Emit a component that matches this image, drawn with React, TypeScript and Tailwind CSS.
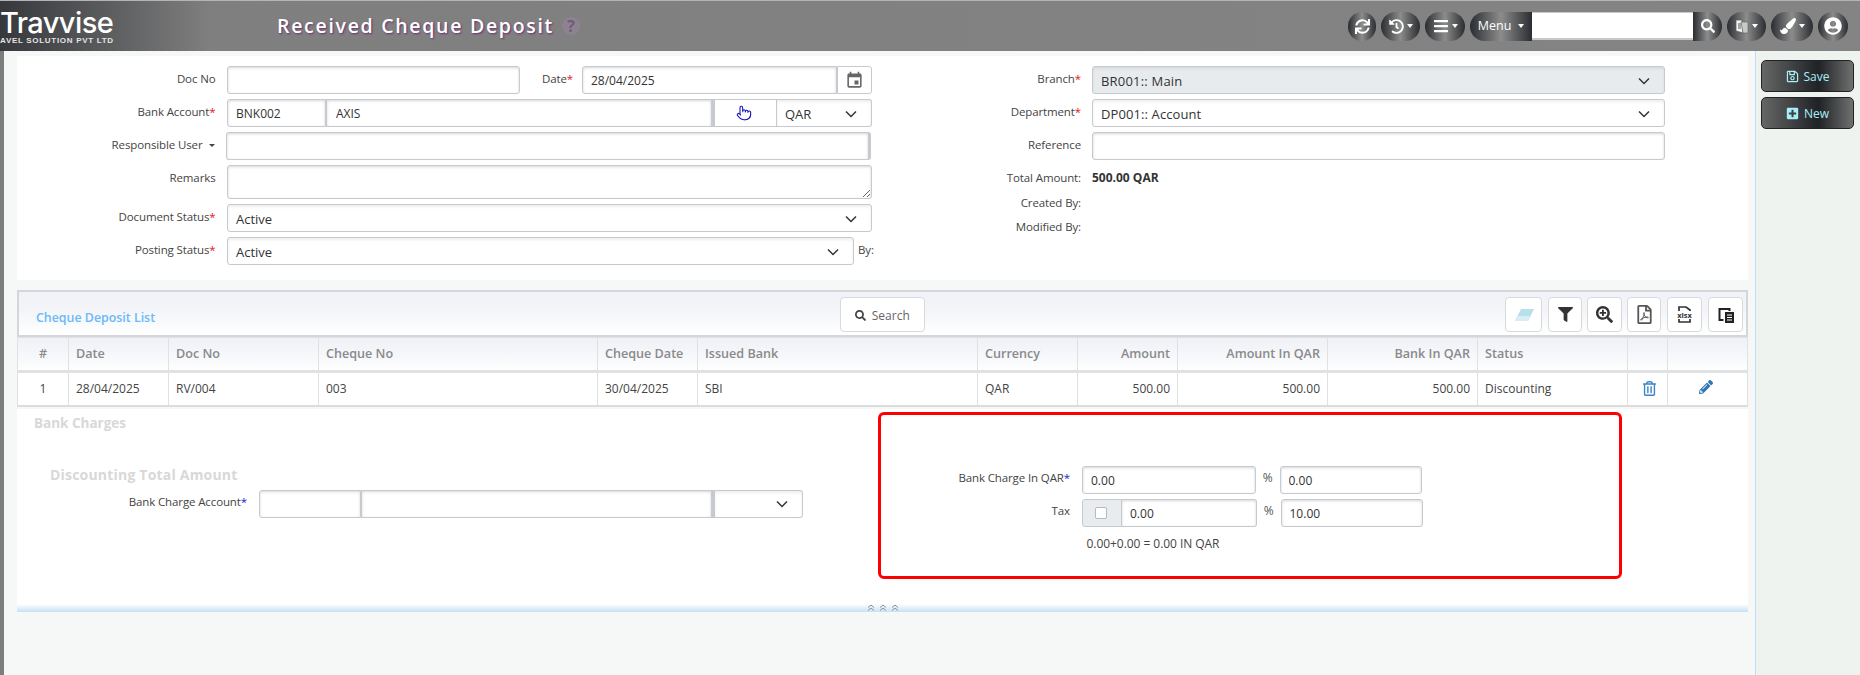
import type { ReactNode } from 'react';
import {
  FaBars,
  FaFilter,
  FaHistory,
  FaPaintBrush,
  FaPencilAlt,
  FaPlusSquare,
  FaRegFilePdf,
  FaRegSave,
  FaRegTrashAlt,
  FaSearch,
  FaSearchPlus,
  FaSync,
  FaUserCircle,
} from 'react-icons/fa';
import { MdEvent } from 'react-icons/md';
import { Pointer } from 'lucide-react';

const INPUT =
  'shrink-0 h-7 border border-[#c6cacf] rounded-[3px] bg-white px-[8px] pt-[1px] text-[12px] text-[#333] shadow-[inset_0_1px_3px_rgba(0,0,0,0.16)] outline-none';

const PILL =
  'h-[29px] flex items-center justify-center gap-[3px] text-white bg-[linear-gradient(90deg,#2a2d31_0%,#8c8c8c_50%,#2a2d31_100%)]';

const Caret = () => (
  <span className="inline-block w-0 h-0 border-x-[3px] border-t-[4px] border-x-transparent border-t-white" />
);

const Chevron = () => (
  <svg width="14" height="14" viewBox="0 0 14 14" fill="none" stroke="#333" strokeWidth="1.5" className="-mt-[3px]">
    <path d="M2 4.5 7 9.5 12 4.5" />
  </svg>
);

const Label = ({
  children,
  star,
  className,
}: {
  children: ReactNode;
  star?: 'red' | 'blue';
  className: string;
}) => (
  <div className={`shrink-0 text-right text-[11.5px] tracking-[-0.12px] text-[#444] ${className}`}>
    {children}
    {star === 'red' && <span className="text-[#e02020]">*</span>}
    {star === 'blue' && <span className="text-[#1a1ae0]">*</span>}
  </div>
);

const Select = ({
  value,
  className,
  disabled,
}: {
  value?: string;
  className: string;
  disabled?: boolean;
}) => (
  <div
    className={`shrink-0 h-7 flex items-center justify-between border border-[#c6cacf] rounded-[3px] pl-[8px] pr-[13px] pt-[4px] text-[13px] text-[#333] shadow-[inset_0_2px_3px_rgba(0,0,0,0.07)] ${
      disabled ? 'bg-[#e8ebee]' : 'bg-white'
    } ${className}`}
  >
    <span>{value}</span>
    <Chevron />
  </div>
);

const ToolButton = ({ children, className }: { children: ReactNode; className: string }) => (
  <button
    className={`h-[35px] flex items-center justify-center bg-white border border-[#d9d9d9] rounded-[4px] text-[#333] ${className}`}
  >
    {children}
  </button>
);

const Header = () => (
  <header className="h-[51px] shrink-0 flex items-center border-t border-[#b4b4b4] bg-[linear-gradient(90deg,#36383c_0px,#7f7f7f_210px,#848484_100%)]">
    <div className="w-[277px] h-full shrink-0 pt-[10px] text-white overflow-hidden">
      <div className="text-[29px] leading-[24px] font-medium font-['Inter',sans-serif] tracking-[-0.55px]">
        Travvise
      </div>
      <div className="mt-[1px] text-[8px] leading-[10px] font-bold tracking-[0.7px] font-['Liberation_Sans',sans-serif] text-[#e4e4e4]">
        AVEL SOLUTION PVT LTD
      </div>
    </div>
    <div className="text-[19.5px] font-semibold tracking-[1.7px] text-white [text-shadow:1px_1px_2px_#6b2f70]">
      Received Cheque Deposit
    </div>
    <div className="ml-[8px] w-[18px] h-[18px] rounded-full bg-[#8d8390] text-[#735a77] text-[16px] font-bold flex items-center justify-center">
      ?
    </div>
    <div className="ml-auto flex items-center gap-[5px] pr-[12px]">
      <div className={`${PILL} w-[28px] rounded-full`}>
        <FaSync size={15} />
      </div>
      <div className={`${PILL} w-[39px] rounded-full`}>
        <FaHistory size={15} />
        <Caret />
      </div>
      <div className={`${PILL} w-[40px] rounded-full`}>
        <FaBars size={16} />
        <Caret />
      </div>
      <div className="flex items-center">
        <div className={`${PILL} w-[62px] rounded-l-full text-[12.5px] gap-[7px]`}>
          Menu
          <Caret />
        </div>
        <input
          readOnly
          className="w-[161px] h-[28px] bg-white border-t border-b-2 border-[#c9c9c9] outline-none"
        />
        <div className={`${PILL} w-[29px] rounded-r-full`}>
          <FaSearch size={14} />
        </div>
      </div>
      <div className={`${PILL} w-[39px] rounded-full`}>
        <svg width="14" height="17" viewBox="0 0 14 17">
          <path d="M1 2h6l1 13-7-2z" fill="#f2f2f2" stroke="#555" strokeWidth="0.7" />
          <path d="M6 4h7v11H8z" fill="#c9c9c9" stroke="#666" strokeWidth="0.7" />
          <path d="M3 6h3M3 8h3M3 10h3" stroke="#444" strokeWidth="0.9" />
        </svg>
        <Caret />
      </div>
      <div className={`${PILL} w-[42px] rounded-full`}>
        <FaPaintBrush size={16} />
        <Caret />
      </div>
      <div className={`${PILL} w-[30px] rounded-full`}>
        <FaUserCircle size={18} />
      </div>
    </div>
  </header>
);

const TopForm = () => (
  <section className="h-[224px] flex bg-white pt-[10px]">
    <div className="w-[855px] shrink-0 flex flex-col gap-[5px]">
      <div className="flex h-7">
        <Label className="w-[198.5px] leading-[26px]">Doc No</Label>
        <input readOnly className={`${INPUT} ml-[11.5px] w-[293px]`} />
        <Label star="red" className="w-[53px] leading-[26px]">
          Date
        </Label>
        <input readOnly defaultValue="28/04/2025" className={`${INPUT} ml-[9px] w-[255px] rounded-r-none`} />
        <div className="w-[36px] h-7 flex items-center justify-center border border-[#c6cacf] rounded-r-[3px] text-[#666]">
          <MdEvent size={19} />
        </div>
      </div>
      <div className="flex h-7">
        <Label star="red" className="w-[198.5px] leading-[26px]">
          Bank Account
        </Label>
        <input readOnly defaultValue="BNK002" className={`${INPUT} ml-[11.5px] w-[99px] rounded-r-none`} />
        <input readOnly defaultValue="AXIS" className={`${INPUT} w-[386px] rounded-none pl-[9px]`} />
        <div className="w-[65px] pr-[4px] h-7 flex items-center justify-center border border-l-[3px] border-[#c6cacf] text-[#1414b4]">
          <Pointer size={16} strokeWidth={1.6} fill="#ffffff" />
        </div>
        <Select value="QAR" className="w-[95px] rounded-l-none border-l-0" />
      </div>
      <div className="flex h-7">
        <Label className="w-[198.5px] pr-[1px] leading-[26px]">
          Responsible User
          <span className="inline-block align-middle ml-[6px] w-0 h-0 border-x-[3px] border-t-[3px] border-x-transparent border-t-[#444]" />
        </Label>
        <input readOnly className={`${INPUT} ml-[10.5px] w-[645px] border-r-[3px]`} />
      </div>
      <div className="flex h-[34px]">
        <Label className="w-[198.5px] leading-[26px]">Remarks</Label>
        <textarea readOnly className={`${INPUT} ml-[11.5px] w-[645px] h-[34px]`} />
      </div>
      <div className="flex h-7">
        <Label star="red" className="w-[198.5px] leading-[26px]">
          Document Status
        </Label>
        <Select value="Active" className="ml-[11.5px] w-[645px]" />
      </div>
      <div className="flex h-7">
        <Label star="red" className="w-[198.5px] leading-[26px]">
          Posting Status
        </Label>
        <Select value="Active" className="ml-[11.5px] w-[627px]" />
        <Label className="ml-[4px] leading-[26px]">By:</Label>
      </div>
    </div>
    <div className="flex flex-col gap-[5px]">
      <div className="flex h-7">
        <Label star="red" className="w-[209px] leading-[26px]">
          Branch
        </Label>
        <Select value="BR001:: Main" disabled className="ml-[11px] w-[573px] tracking-[0.2px]" />
      </div>
      <div className="flex h-7">
        <Label star="red" className="w-[209px] leading-[26px]">
          Department
        </Label>
        <Select value="DP001:: Account" className="ml-[11px] w-[573px] tracking-[0.1px]" />
      </div>
      <div className="flex h-7">
        <Label className="w-[209px] leading-[26px]">Reference</Label>
        <input readOnly className={`${INPUT} ml-[11px] w-[573px]`} />
      </div>
      <div className="flex h-[22px] mt-[2px]">
        <Label className="w-[209px] leading-[22px]">Total Amount:</Label>
        <div className="ml-[11px] text-[12px] leading-[22px] font-bold text-[#333]">500.00 QAR</div>
      </div>
      <Label className="w-[209px] leading-[22px] mt-[-2px]">Created By:</Label>
      <Label className="w-[209px] leading-[22px] mt-[-3px]">Modified By:</Label>
    </div>
  </section>
);

const COLUMNS = [
  { name: '#', col: 'w-[51px]', cell: 'text-center' },
  { name: 'Date', col: 'w-[100px]', cell: 'text-left' },
  { name: 'Doc No', col: 'w-[150px]', cell: 'text-left' },
  { name: 'Cheque No', col: 'w-[279px]', cell: 'text-left' },
  { name: 'Cheque Date', col: 'w-[100px]', cell: 'text-left' },
  { name: 'Issued Bank', col: 'w-[280px]', cell: 'text-left' },
  { name: 'Currency', col: 'w-[100px]', cell: 'text-left' },
  { name: 'Amount', col: 'w-[100px]', cell: 'text-right' },
  { name: 'Amount In QAR', col: 'w-[150px]', cell: 'text-right' },
  { name: 'Bank In QAR', col: 'w-[150px]', cell: 'text-right' },
  { name: 'Status', col: 'w-[150px]', cell: 'text-left' },
  { name: '', col: 'w-[40px]', cell: 'text-left' },
  { name: '', col: 'w-[80px]', cell: 'text-left' },
];

const ROW = ['1', '28/04/2025', 'RV/004', '003', '30/04/2025', 'SBI', 'QAR', '500.00', '500.00', '500.00', 'Discounting'];

const DepositList = () => (
  <section className="mt-[10px]">
    <div className="h-[47px] flex items-center border-2 border-[#d5d6d9] bg-[linear-gradient(180deg,#f0f2f7_0%,#f2f4f8_40%,#ffffff_100%)]">
      <div className="w-[821px] shrink-0 pl-[17px] pt-[10px] text-[12.4px] font-semibold text-[#6cb8f8]">
        Cheque Deposit List
      </div>
      <button className="mt-[2px] pt-[2px] h-[35px] w-[84.5px] flex items-center justify-center gap-[6px] bg-white border border-[#d9d9d9] rounded-[4px] text-[12px] text-[#666]">
        <FaSearch size={11} className="text-[#444]" />
        Search
      </button>
      <div className="ml-auto flex items-center pr-[3px] pt-[2px]">
        <ToolButton className="w-[37px]">
          <svg width="20" height="12" viewBox="0 0 20 12">
            <path d="M7 0h13l-6 12H1z" fill="#b5e0ec" />
            <path d="M3.5 7h13L14 12H1z" fill="#d8eef4" />
          </svg>
        </ToolButton>
        <ToolButton className="w-[34px] ml-[6px]">
          <FaFilter size={15} />
        </ToolButton>
        <ToolButton className="w-[35px] ml-[5px]">
          <FaSearchPlus size={17} />
        </ToolButton>
        <ToolButton className="w-[34px] ml-[5px] text-[#555]">
          <FaRegFilePdf size={19} />
        </ToolButton>
        <ToolButton className="w-[35px] ml-[6px]">
          <span className="flex flex-col items-center">
            <svg width="13" height="5" viewBox="0 0 13 5" fill="none" stroke="#333" strokeWidth="1.7">
              <path d="M1 5V1h7l4 3v1" />
            </svg>
            <span className="text-[7.5px] font-bold leading-[8px] text-[#333]">xlsx</span>
            <svg width="13" height="4" viewBox="0 0 13 4" fill="none" stroke="#333" strokeWidth="1.7">
              <path d="M1 0v3h11V0" />
            </svg>
          </span>
        </ToolButton>
        <ToolButton className="w-[35px] ml-[6px]">
          <svg width="18" height="18" viewBox="0 0 18 18">
            <path d="M1.5 2h12v3h-2v-1H3.5v9h3v2h-5z" fill="#222" />
            <rect x="8" y="6" width="9" height="11" fill="#222" />
            <path d="M10 9h5M10 11.5h5M10 14h5" stroke="#fff" strokeWidth="1" />
          </svg>
        </ToolButton>
      </div>
    </div>
    <table className="table-fixed w-[1730px] border-collapse border-b-2 border-[#dcdcdc]">
      <colgroup>
        {COLUMNS.map((c, i) => (
          <col key={i} className={c.col} />
        ))}
      </colgroup>
      <thead>
        <tr className="h-[34px] bg-[linear-gradient(180deg,#eff1f6_0%,#f3f5f9_35%,#ffffff_100%)]">
          {COLUMNS.map((c, i) => (
            <th
              key={i}
              className={`border border-b-[3px] border-[#e0e1e3] px-[7px] text-[12.6px] font-semibold text-[#8a8a8a] ${c.cell}`}
            >
              {c.name}
            </th>
          ))}
        </tr>
      </thead>
      <tbody>
        <tr className="h-[34px] bg-white">
          {ROW.map((v, i) => (
            <td key={i} className={`border border-[#e0e1e3] px-[7px] text-[12px] text-[#444] ${COLUMNS[i].cell}`}>
              {v}
            </td>
          ))}
          <td className="border border-[#e0e1e3] pl-[14px] text-[#3a86c8]">
            <FaRegTrashAlt size={15} className="block" />
          </td>
          <td className="border border-[#e0e1e3] pl-[31px] text-[#2f75b5]">
            <FaPencilAlt size={14} className="block -mt-[3px]" />
          </td>
        </tr>
      </tbody>
    </table>
  </section>
);

const BankCharges = () => (
  <section className="mt-[2px] h-[195px] flex bg-white">
    <div className="w-[861px] shrink-0">
      <div className="ml-[17px] mt-[4px] text-[13.5px] leading-[20px] font-bold text-[#d8d8d8]">Bank Charges</div>
      <div className="ml-[33px] mt-[32px] text-[14px] leading-[20px] tracking-[0.2px] font-bold text-[#d8d8d8]">
        Discounting Total Amount
      </div>
      <div className="flex mt-[5px]">
        <Label star="blue" className="w-[230px] leading-[24px]">
          Bank Charge Account
        </Label>
        <input readOnly className={`${INPUT} ml-[12px] w-[102px] rounded-r-none`} />
        <input readOnly className={`${INPUT} w-[351px] rounded-none`} />
        <Select className="w-[91px] rounded-l-none border-l-[3px]" />
      </div>
    </div>
    <div className="mt-[3px] w-[744px] h-[167px] border-[3px] border-[#ff0000] rounded-[6px] pt-[51px]">
      <div className="flex">
        <Label star="blue" className="w-[189px] leading-[24px]">
          Bank Charge In QAR
        </Label>
        <input readOnly defaultValue="0.00" className={`${INPUT} ml-[12px] w-[174px]`} />
        <div className="w-[23.5px] text-center text-[12px] leading-[24px] text-[#555]">%</div>
        <input readOnly defaultValue="0.00" className={`${INPUT} w-[142.5px]`} />
      </div>
      <div className="flex mt-[5px]">
        <Label className="w-[189px] leading-[24px]">Tax</Label>
        <div className="ml-[12px] w-[40px] pr-[2px] h-7 flex items-center justify-center border border-[#c6cacf] rounded-l-[3px] bg-[#e9ecef]">
          <span className="w-[12px] h-[12px] bg-white border border-[#b8b8b8] rounded-[2px]" />
        </div>
        <input readOnly defaultValue="0.00" className={`${INPUT} w-[135px] rounded-l-none border-l-0`} />
        <div className="w-[23.5px] text-center text-[12px] leading-[24px] text-[#555]">%</div>
        <input readOnly defaultValue="10.00" className={`${INPUT} w-[142.5px]`} />
      </div>
      <div className="ml-[205.5px] mt-[8px] text-[12px] leading-[18px] tracking-[-0.05px] text-[#444]">
        0.00+0.00 = 0.00 IN QAR
      </div>
    </div>
  </section>
);

const CollapseBar = () => (
  <div className="h-[8px] flex items-center justify-center gap-[4px] bg-[linear-gradient(180deg,#ffffff_0%,#c6e1f5_100%)]">
    {[0, 1, 2].map((i) => (
      <svg key={i} width="8" height="7" viewBox="0 0 8 7" fill="none" stroke="#8a8f94" strokeWidth="1">
        <path d="M1 3.5 4 1l3 2.5M1 6.5 4 4l3 2.5" />
      </svg>
    ))}
  </div>
);

const Sidebar = () => (
  <aside className="w-[105px] shrink-0 border-l border-[#bcdff5] bg-[#eef3f0] pl-[5px] pt-[9px] flex flex-col gap-[5px]">
    <button className="w-[93px] h-[32px] pt-[1px] flex items-center justify-center gap-[5px] border border-[#222] rounded-[5px] text-[12px] text-[#a8f0f8] bg-[linear-gradient(90deg,#666_0%,#1f2226_62%,#707070_100%)]">
      <FaRegSave size={13} />
      Save
    </button>
    <button className="w-[93px] h-[32px] pt-[1px] flex items-center justify-center gap-[5px] border border-[#222] rounded-[5px] text-[12px] text-[#a8f0f8] bg-[linear-gradient(90deg,#666_0%,#1f2226_62%,#707070_100%)]">
      <FaPlusSquare size={13} />
      New
    </button>
  </aside>
);

export default function App() {
  return (
    <div className="w-[1860px] h-[675px] flex flex-col overflow-hidden font-['Open_Sans',sans-serif]">
      <Header />
      <div className="flex-1 flex min-h-0 bg-[#f6f8f7]">
        <div className="w-[4px] shrink-0 bg-[#7d7d7d]" />
        <main className="flex-1 min-w-0 pl-[13px] pr-[7px] pt-[5px]">
          <TopForm />
          <DepositList />
          <BankCharges />
          <CollapseBar />
        </main>
        <Sidebar />
      </div>
    </div>
  );
}
